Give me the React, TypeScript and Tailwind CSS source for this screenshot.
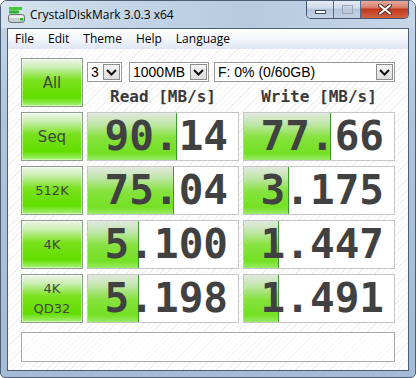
import React from "react";

type Row = { label: string[]; read: string; write: string };

const rows: Row[] = [
  { label: ["Seq"], read: "90.14", write: "77.66" },
  { label: ["512K"], read: "75.04", write: "3.175" },
  { label: ["4K"], read: "5.100", write: "1.447" },
  { label: ["4K", "QD32"], read: "5.198", write: "1.491" },
];

const menus = ["File", "Edit", "Theme", "Help", "Language"];

// log scale like the original: 0.1 MB/s .. 10000 MB/s
const barPercent = (v: string): number => {
  const n = parseFloat(v);
  return Math.max(0, Math.min(1, Math.log10(n * 10) / 5)) * 100;
};

const Chevron: React.FC = () => (
  <svg width="11" height="7" viewBox="0 0 11 7">
    <path d="M1 1 L5.5 5.5 L10 1" fill="none" stroke="#111" strokeWidth="2" />
  </svg>
);

const Combo: React.FC<{ text: string; width: string }> = ({ text, width }) => (
  <div
    className={`${width} flex h-[20px] items-stretch border border-[#9a9a9a] bg-white p-px`}
  >
    <div className="flex flex-1 items-center pl-[2px] font-['Liberation_Sans',sans-serif] text-[14px] leading-none text-black">
      {text}
    </div>
    <div className="flex w-[17px] items-center justify-center border border-[#8c8c8c] bg-[linear-gradient(to_bottom,#f4f4f4,#dcdcdc)]">
      <Chevron />
    </div>
  </div>
);

const GreenButton: React.FC<{ lines: string[]; comic?: boolean }> = ({
  lines,
  comic,
}) => (
  <div className="flex h-[49px] flex-col items-center justify-center border border-[#8e9e8e] bg-[linear-gradient(to_bottom,#eef5ea_0%,#c9eeb0_18%,#7ae21e_45%,#62dd00_82%,#a8f27a_100%)] shadow-[inset_0_0_0_1px_rgba(255,255,255,0.45)]">
    {lines.map((l) => (
      <span
        key={l}
        className={`leading-[20px] text-[#444] ${
          comic
            ? "font-['DejaVu_Sans',sans-serif] text-[15px]"
            : "font-['DejaVu_Sans',sans-serif] text-[13px]"
        }`}
      >
        {l}
      </span>
    ))}
  </div>
);

const ValueBox: React.FC<{ value: string }> = ({ value }) => (
  <div className="relative flex h-[49px] items-center justify-end border border-[#c6c6c6] bg-white pr-[10px]">
    <div
      className="absolute top-0 bottom-0 left-0 border-r border-[#3c9a2c] bg-[linear-gradient(to_bottom,#e2e8e0_0%,#c2e6ad_22%,#86e23e_52%,#74e024_85%,#9aea66_100%)]"
      style={{ width: `${barPercent(value)}%` }}
    />
    <span className="relative font-['DejaVu_Sans_Mono',monospace] text-[41px] leading-none font-bold text-[#414141]">
      {value}
    </span>
  </div>
);

const DiskIcon: React.FC = () => (
  <svg width="18" height="18" viewBox="0 0 18 18">
    <rect x="1" y="1" width="13" height="3" rx="0.5" fill="#3fc83a" />
    <rect x="1" y="4.5" width="10" height="3" rx="0.5" fill="#2fae2c" />
    <rect x="0.5" y="8.5" width="16" height="8" rx="2.5" fill="#c9ccd0" stroke="#6f747a" />
    <rect x="1.5" y="9.5" width="14" height="2.5" rx="1" fill="#eef0f2" />
    <rect x="12" y="12" width="3" height="2.5" fill="#27c31f" />
  </svg>
);

const App: React.FC = () => {
  return (
    <div className="relative h-[378px] w-[416px] overflow-hidden rounded-t-[7px] rounded-b-[5px] border border-[#4d5f74] bg-[linear-gradient(to_bottom,#d3dfec_0px,#c2d3e6_28px,#b0c4dc_120px,#a5bbd5_378px)]">
      {/* title bar */}
      <div className="flex h-[27px] items-center pl-[7px] bg-[linear-gradient(to_right,#d6e2ee_0%,#c1d3e6_35%,#b7cbe0_60%,#c6d6e7_100%)]">
        <DiskIcon />
        <span className="ml-[4px] font-['Open_Sans',sans-serif] text-[12px] text-black">
          CrystalDiskMark 3.0.3 x64
        </span>
      </div>

      {/* caption buttons */}
      <div className="absolute top-[-1px] right-[6px] flex h-[19px] overflow-hidden rounded-b-[5px] border border-t-0 border-[#435571]">
        <div className="flex w-[27px] items-center justify-center border-r border-[#56698a] bg-[linear-gradient(to_bottom,#e6edf5_0%,#d0dcea_45%,#b4c5da_50%,#c4d3e4_100%)]">
          <div className="mt-[5px] h-[4px] w-[11px] border border-[#3c4a5c] bg-white" />
        </div>
        <div className="flex w-[27px] items-center justify-center border-r border-[#56698a] bg-[linear-gradient(to_bottom,#e6edf5_0%,#d0dcea_45%,#b4c5da_50%,#c4d3e4_100%)]">
          <div className="flex h-[9px] w-[11px] items-center justify-center border border-[#9aa8ba]">
            <div className="h-[5px] w-[7px] border border-[#c4cedb]" />
          </div>
        </div>
        <div className="flex w-[47px] items-center justify-center bg-[linear-gradient(to_bottom,#eab0a2_0%,#d98470_40%,#c23a20_52%,#d0613f_100%)]">
          <svg width="14" height="11" viewBox="0 0 14 11">
            <path d="M2 1.5 L12 9.5 M12 1.5 L2 9.5" stroke="#4a2a24" strokeWidth="4" strokeLinecap="round" />
            <path d="M2 1.5 L12 9.5 M12 1.5 L2 9.5" stroke="#ffffff" strokeWidth="2.2" strokeLinecap="round" />
          </svg>
        </div>
      </div>

      {/* client container */}
      <div className="mx-[6px] flex h-[343px] flex-col border border-[#4b5e76] bg-white">
        {/* menu bar */}
        <div className="flex h-[20px] items-center bg-[linear-gradient(to_bottom,#ffffff_0%,#f3f6fb_50%,#dfe7f3_100%)]">
          {menus.map((m) => (
            <span
              key={m}
              className="px-[7px] font-['Open_Sans',sans-serif] text-[12px] leading-none text-black"
            >
              {m}
            </span>
          ))}
        </div>

        {/* client area */}
        <div className="flex flex-1 flex-col gap-[9px] bg-[repeating-linear-gradient(-45deg,#ffffff_0px,#ffffff_3px,#f1f1f1_3px,#f1f1f1_4px)] px-[13px] pt-[9px] pb-[8px]">
          <div className="grid grid-cols-[62px_152px_152px] gap-x-[4px] gap-y-[5px]">
            <GreenButton lines={["All"]} comic />
            <div className="col-span-2 flex flex-col">
              <div className="mt-[4px] flex gap-[7px]">
                <Combo text="3" width="w-[35px]" />
                <Combo text="1000MB" width="w-[80px]" />
                <Combo text="F: 0% (0/60GB)" width="w-[181px] -ml-[2px]" />
              </div>
              <div className="mt-[5px] grid grid-cols-[152px_152px] gap-x-[4px]">
                <div className="text-center font-['DejaVu_Sans_Mono',monospace] text-[16px] leading-[20px] font-bold text-[#3a3a3a]">
                  Read [MB/s]
                </div>
                <div className="text-center font-['DejaVu_Sans_Mono',monospace] text-[16px] leading-[20px] font-bold text-[#3a3a3a]">
                  Write [MB/s]
                </div>
              </div>
            </div>

            {rows.map((r) => (
              <React.Fragment key={r.label.join(" ")}>
                <GreenButton lines={r.label} comic={r.label[0] === "Seq"} />
                <ValueBox value={r.read} />
                <ValueBox value={r.write} />
              </React.Fragment>
            ))}
          </div>

          <div className="h-[30px] border border-[#a9a9a9] bg-white/60" />
        </div>
      </div>
    </div>
  );
};

export default App;
